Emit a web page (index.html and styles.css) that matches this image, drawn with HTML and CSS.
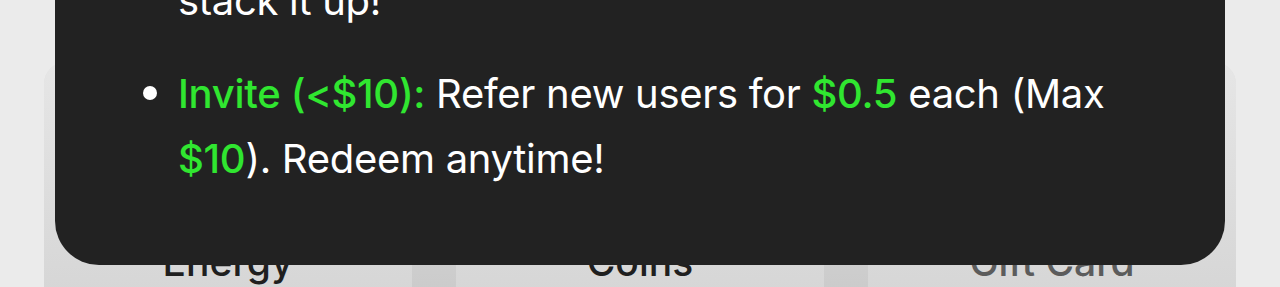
FILE: index.html
```html
<!DOCTYPE html>
<html lang="en">
<head>
<meta charset="utf-8">
<title>Rewards</title>
<link rel="stylesheet" href="styles.css">
</head>
<body>
<div class="page">
  <div class="cards">
    <div class="card"><span class="card-label">Energy</span></div>
    <div class="card"><span class="card-label">Coins</span></div>
    <div class="card"><span class="card-label muted">Gift Card</span></div>
  </div>
  <div class="popup">
    <ul class="rules">
      <li class="rule cont">stack it up!</li>
      <li class="rule bullet"><span class="hl">Invite (&lt;$10):</span> Refer new users for <span class="num">$0.5</span> each (Max <span class="num">$10</span>). Redeem anytime!</li>
    </ul>
  </div>
</div>
</body>
</html>
```

FILE: styles.css
```css
* { box-sizing: border-box; }
html, body {
  margin: 0;
  padding: 0;
  height: 287px;
  overflow: hidden;
  background: #ebebeb;
  font-family: Inter, "Noto Sans", sans-serif;
}
.page {
  position: relative;
  height: 287px;
  overflow: hidden;
}
.cards {
  display: grid;
  grid-template-columns: repeat(3, 1fr);
  gap: 44px;
  margin: 62px 44px 0;
  border-radius: 22px 22px 0 0;
  background: linear-gradient(#e2e2e2, #c8c8c8);
}
.card {
  height: 260px;
  border-radius: 22px 22px 0 0;
  background: linear-gradient(#e6e6e6, #d4d4d4);
  padding-top: 177px;
  text-align: center;
}
.card-label {
  font-size: 39px;
  line-height: 46px;
  font-weight: 500;
  color: #1f1f1f;
}
.card-label.muted { color: #5c5c5c; }
.popup {
  position: absolute;
  left: 55px;
  right: 55px;
  bottom: 22px;
  background: #222222;
  border-radius: 0 0 44px 44px;
  padding: 0 60px 74px 123px;
  color: #ffffff;
}
.rules {
  list-style: none;
  margin: 0;
  padding: 0;
  font-size: 40px;
  line-height: 65px;
  letter-spacing: -0.3px;
}
.rule + .rule { margin-top: 28px; }
.bullet { position: relative; }
.bullet::before {
  content: "";
  position: absolute;
  left: -35px;
  top: 25px;
  width: 14px;
  height: 14px;
  border-radius: 50%;
  background: #ffffff;
}
.hl { color: #30e630; font-weight: 500; }
.num { color: #30e630; font-weight: 500; }
```
